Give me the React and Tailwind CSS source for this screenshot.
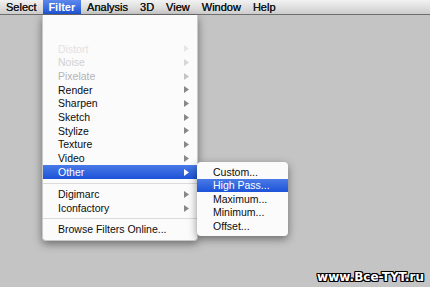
import React from 'react';

const menuBar = [
  { label: 'Select', cls: 'px-[6px]' },
  { label: 'Filter', cls: 'w-[38.5px] justify-center', active: true },
  { label: 'Analysis', cls: 'px-[6px]' },
  { label: '3D', cls: 'px-[6px]' },
  { label: 'View', cls: 'px-[6px]' },
  { label: 'Window', cls: 'px-[6px]' },
  { label: 'Help', cls: 'px-[6px]' },
];

const filterItems = [
  { label: 'Distort', tone: 'text-[#e2e2e2]', arrow: 'text-[#e6e6e6]' },
  { label: 'Noise', tone: 'text-[#d0d0d0]', arrow: 'text-[#d6d6d6]' },
  { label: 'Pixelate', tone: 'text-[#b4b4b4]', arrow: 'text-[#c4c4c4]' },
  { label: 'Render' },
  { label: 'Sharpen' },
  { label: 'Sketch' },
  { label: 'Stylize' },
  { label: 'Texture' },
  { label: 'Video' },
  { label: 'Other', active: true },
];

const otherItems = ['Custom...', 'High Pass...', 'Maximum...', 'Minimum...', 'Offset...'];

const Arrow = ({ className }) => (
  <svg width="5" height="7" viewBox="0 0 5 7" className={className}>
    <path d="M0 0 L5 3.5 L0 7 Z" fill="currentColor" />
  </svg>
);

const Row = ({ label, tone = 'text-[#0c0c0c]', arrow = 'text-[#888]', active, submenu = true }) => (
  <div
    className={`flex h-[13.7px] items-center justify-between pl-[15px] pr-[8px] ${
      active ? 'bg-gradient-to-b from-[#4a7ae6] to-[#1c52d8] text-white' : tone
    }`}
  >
    <span>{label}</span>
    {submenu && <Arrow className={active ? 'text-white' : arrow} />}
  </div>
);

const Separator = ({ h }) => (
  <div className={`flex items-center ${h}`}>
    <div className="h-px w-full bg-[#dadada]" />
  </div>
);

export default function App() {
  return (
    <div
      className="relative h-[287px] w-[430px] overflow-hidden bg-[#c4c4c4]"
      style={{ fontFamily: '"Liberation Sans", Arial, sans-serif' }}
    >
      {/* Menu bar */}
      <div className="flex h-[15px] items-stretch border-b border-[#6f6f6f] bg-gradient-to-b from-[#f2f2f2] to-[#cdcdcd] text-[11px] leading-none text-[#1b1b1b] [text-shadow:0_0_0.4px_#000]">
        {menuBar.map((m) => (
          <div
            key={m.label}
            className={`flex items-center ${m.cls} ${
              m.active ? 'bg-gradient-to-b from-[#5d88ea] to-[#1f55d9] font-bold text-white [text-shadow:none]' : ''
            }`}
          >
            {m.label}
          </div>
        ))}
      </div>

      {/* Filter menu */}
      <div className="absolute left-[42px] top-[15px] w-[156px] rounded-b-[4px] border-x border-b border-[#c9c9c9] bg-[#fbfbfb] pb-[4px] text-[10.5px] leading-none shadow-[0_3px_8px_rgba(0,0,0,0.45)]">
        <div className="h-[27px]" />
        {filterItems.map((it) => (
          <Row key={it.label} {...it} />
        ))}
        <Separator h="h-[9px]" />
        <Row label="Digimarc" />
        <Row label="Iconfactory" />
        <Separator h="h-[7px]" />
        <Row label="Browse Filters Online..." submenu={false} />
      </div>

      {/* Other submenu */}
      <div className="absolute left-[197px] top-[162px] w-[91px] rounded-[4px] bg-[#fbfbfb] pb-[3.5px] pt-[3px] text-[10.5px] leading-none text-[#0c0c0c] shadow-[0_3px_8px_rgba(0,0,0,0.45)]">
        {otherItems.map((label) => (
          <div
            key={label}
            className={`flex h-[13.5px] items-center pl-[16px] ${
              label === 'High Pass...' ? 'bg-gradient-to-b from-[#4a7ae6] to-[#1c52d8] text-white' : ''
            }`}
          >
            {label}
          </div>
        ))}
      </div>

      {/* Watermark */}
      <div
        className="absolute right-[6px] bottom-[4px] text-[12px] font-bold leading-none text-white [text-shadow:1px_0_0_#000,-1px_0_0_#000,0_1px_0_#000,0_-1px_0_#000,1px_1px_0_#000,-1px_-1px_0_#000,1px_-1px_0_#000,-1px_1px_0_#000]"
        style={{ fontFamily: '"DejaVu Sans", sans-serif' }}
      >
        www.Bce-TYT.ru
      </div>
    </div>
  );
}
